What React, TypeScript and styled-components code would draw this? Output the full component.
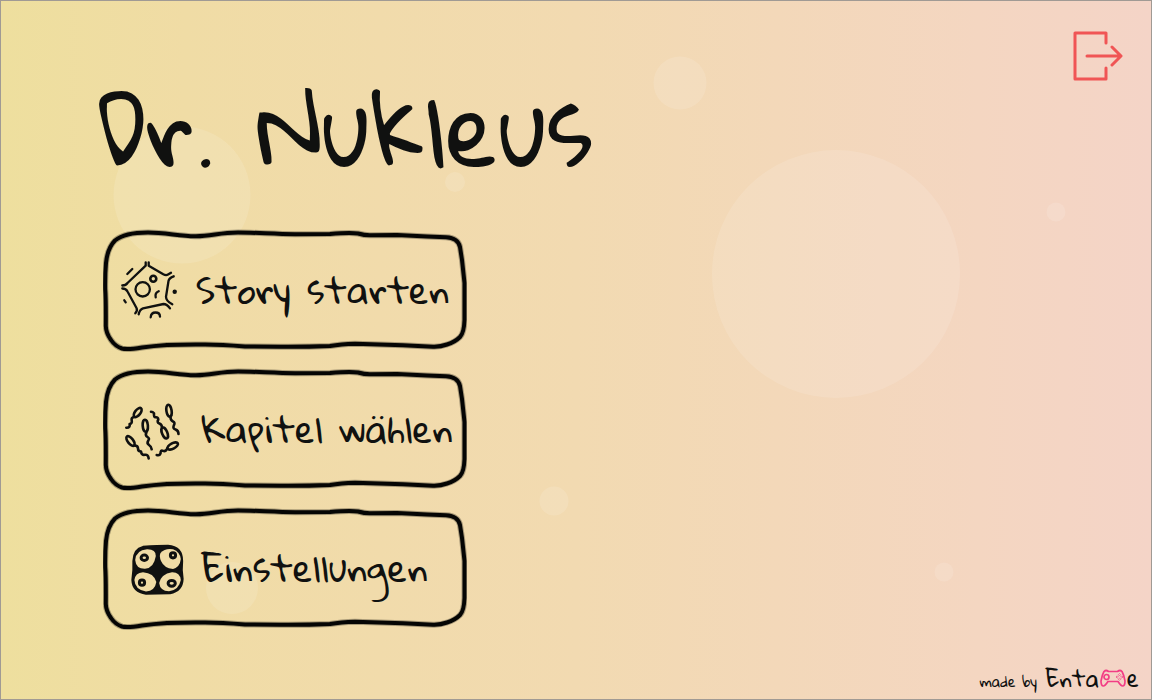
import React from 'react';
import styled, { createGlobalStyle } from 'styled-components';

const GlobalStyle = createGlobalStyle`
  *, *::before, *::after { box-sizing: border-box; }
  body { margin: 0; }
`;

const ink = '#101110';

const Screen = styled.main`
  position: relative;
  display: flex;
  flex-direction: column;
  min-height: 100vh;
  overflow: hidden;
  border: 1px solid #a09a94;
  color: ${ink};
  font-family: 'Gloria Hallelujah', Lato, 'Liberation Sans', sans-serif;
  background: linear-gradient(90deg, #eedf9e 0%, #f0dca5 16%, #f2dab1 50%, #f4d6c1 85%, #f4d4c7 100%);
`;

const Bubble = styled.span<{ $x: number; $y: number; $size: number }>`
  position: absolute;
  left: ${(p) => p.$x}%;
  top: ${(p) => p.$y}%;
  width: ${(p) => p.$size}px;
  height: ${(p) => p.$size}px;
  border-radius: 50%;
  background: rgba(255, 255, 255, 0.12);
  transform: translate(-50%, -50%);
`;

const Body = styled.div`
  position: relative;
  display: flex;
  justify-content: space-between;
  align-items: flex-start;
  flex: 1;
  padding: 28px 28px 0 96px;
`;

const Title = styled.h1`
  margin: 40px 0 44px;
  font-size: 96px;
  line-height: 116px;
  font-weight: 500;
  white-space: nowrap;
`;

const Menu = styled.nav`
  display: flex;
  flex-direction: column;
  gap: 15px;
  padding-left: 6px;
`;

const MenuButton = styled.button`
  position: relative;
  display: flex;
  align-items: center;
  gap: 15px;
  width: 364px;
  height: 124px;
  padding: 0 0 0 18px;
  border: 0;
  background: none;
  color: inherit;
  font: inherit;
  font-size: 36px;
  line-height: 48px;
  white-space: nowrap;
  cursor: pointer;
`;

const Label = styled.span`
  padding-bottom: 4px;
`;

const Frame = styled.svg`
  position: absolute;
  inset: 0;
  width: 100%;
  height: 100%;
  fill: none;
  stroke: #050504;
  stroke-linejoin: round;
`;

const MenuIcon = styled.svg<{ $width: number }>`
  flex: none;
  width: ${(p) => p.$width}px;
  height: 60px;
  fill: none;
  stroke: ${ink};
  stroke-linecap: round;
  stroke-linejoin: round;
`;

const ExitButton = styled.button`
  padding: 0;
  border: 0;
  background: none;
  cursor: pointer;

  svg {
    display: block;
    width: 52px;
    height: 52px;
    fill: none;
    stroke: #f05555;
    stroke-width: 3;
    stroke-linecap: round;
    stroke-linejoin: round;
  }
`;

const Footer = styled.footer`
  position: relative;
  display: flex;
  justify-content: flex-end;
  align-items: baseline;
  gap: 8px;
  padding: 0 12px 4px;
  font-size: 14px;
  line-height: 28px;
`;

const Brand = styled.span`
  display: flex;
  align-items: baseline;
  gap: 1px;
  font-size: 22px;

  svg {
    width: 26px;
    height: 18px;
    fill: none;
    stroke: #f23d85;
    stroke-linejoin: round;
  }
`;

const bubbles = [
  { x: 15.7, y: 27.8, size: 137 },
  { x: 59, y: 11.8, size: 53 },
  { x: 72.6, y: 39.1, size: 248 },
  { x: 39.5, y: 25.9, size: 20 },
  { x: 91.7, y: 30.3, size: 19 },
  { x: 48.1, y: 71.7, size: 29 },
  { x: 82, y: 81.8, size: 19 },
  { x: 20.1, y: 84.1, size: 52 },
];

const CellIcon = () => (
  <MenuIcon $width={60} viewBox="0 0 60 60" strokeWidth="2.3" aria-hidden="true">
    <path d="M24.7 1.3V4.7L6.5 22Q5 24.3 1.3 24.5" />
    <path d="M27.7 1.3V4.7L42.3 13.3Q45 14.8 47 13.6T50 11.8" />
    <path d="M52.7 15.3Q48 17 47.5 20L45 35.7Q45 40 51.3 43.3" />
    <path d="M49 47.3Q46 43 42.5 43L22 47.3Q18.5 48.5 17.7 53.3" />
    <path d="M14.3 52.3Q16.8 49.5 15.5 47L6.5 30.5Q5 27.5 1.3 27.5" />
    <path d="M6.3 13L11.3 8M3.3 39.3L4.7 41.3" />
    <circle cx="21.7" cy="28.3" r="7.2" />
    <circle cx="32.3" cy="17.7" r="3" strokeWidth="2.6" />
    <path d="M37.7 30.3Q33.7 32 34.7 36.3M29.7 56.3Q30 51.5 34.5 51.5T39 55.7" />
    <circle cx="53.7" cy="30.7" r="2.2" fill={ink} stroke="none" />
  </MenuIcon>
);

const BacteriaIcon = () => (
  <MenuIcon $width={65} viewBox="0 0 65 60" strokeWidth="2.6" aria-hidden="true">
    <ellipse cx="16.7" cy="12.5" rx="2.7" ry="5.4" transform="rotate(38 16.7 12.5)" />
    <path d="M13.3 17Q10 17.5 10.7 20.5T8.6 24Q9.5 28 5.3 27.7" />
    <ellipse cx="24.3" cy="25.7" rx="2.6" ry="6" transform="rotate(-4 24.3 25.7)" />
    <path d="M25.4 32Q24 35.5 26.5 37T27.3 40.5Q25.5 43.5 28 45T30.7 49.3" />
    <ellipse cx="48" cy="10.7" rx="2.6" ry="6" transform="rotate(-9 48 10.7)" />
    <path d="M49.5 17Q49.5 20.5 52 21.5T52.8 25.5Q51.5 28.5 54.5 29.5T57.5 34" />
    <ellipse cx="43.7" cy="33" rx="2.6" ry="5.8" transform="rotate(-22 43.7 33)" />
    <path d="M41 27.5Q41 24.5 38.3 23.5T37.3 19.5Q37 17 34.8 17.3T33 13.3Q31.8 11.8 30 11.8" />
    <ellipse cx="9.5" cy="41" rx="2.7" ry="5.8" transform="rotate(-38 9.5 41)" />
    <path d="M13.5 45.5Q17 45.5 17 48.5T20 51.5Q20.5 55.5 23.8 54.8T27.7 58.5" />
    <ellipse cx="51.7" cy="46" rx="2.7" ry="5.8" transform="rotate(62 51.7 46)" />
    <path d="M46.3 48.7Q44.5 52 42 50.8T39.5 53.5Q38.5 56 35.7 55" />
  </MenuIcon>
);

const TissueIcon = () => (
  <MenuIcon $width={65} viewBox="0 0 65 60" strokeWidth="2.3" aria-hidden="true">
    <path
      d="M22 8Q37 7 47 7Q61 8 61 22Q60 31 61.5 40Q61 52 49 54Q36 54 25 54.5Q12 53 11.5 41Q13 31 12.5 22Q13 10 22 8z"
      fill={ink}
    />
    <g fill="#f0dca6" stroke="none">
      <path d="M14.2 21Q15 11 26 10.2Q35 10 34.8 17Q33 29 24 29.8Q15 30 14.2 21z" />
      <path d="M39.5 14Q44 9 52 10.3Q59 13 59.8 20Q59 28 52 30Q43 29 40 22Q38 17 39.5 14z" />
      <path d="M13.4 41Q14 34 22 33.2Q33 34 35.3 43Q34 52 25 52.4Q14 51 13.4 41z" />
      <path d="M38.2 44Q40 35 51 33.2Q59 33 59.8 41Q58 51 48 52.3Q39 52 38.2 44z" />
    </g>
    <g strokeWidth="3">
      <ellipse cx="23.3" cy="18.7" rx="3.2" ry="2.7" />
      <circle cx="52" cy="16.3" r="2.6" />
      <circle cx="21" cy="43.7" r="2.6" />
      <ellipse cx="50.7" cy="44.3" rx="3.6" ry="2.9" />
    </g>
  </MenuIcon>
);

const items = [
  { label: 'Story starten', Icon: CellIcon },
  { label: 'Kapitel wählen', Icon: BacteriaIcon },
  { label: 'Einstellungen', Icon: TissueIcon },
];

const outline =
  'M25 5.5Q33 3.5 45 3.5C62 3.5 76 7 92 7.2C108 7.4 116 3.5 135 3.5C152 3.5 170 5 192 5.3L227 5C238 4 249 3.5 255 4.5Q262 6.5 268 6.3L294 6L324 7.5L343 8.3Q355 9 357 18L359 31L361.5 54V91Q361 104 357 108Q352 113 344 115.5Q337 118 330 117.7L300 116.3L252 114.7Q238 115 227 117Q202 118 177 117.8L142 117.5Q118 115.5 102 115.5Q80 115.3 64 116Q50 117 39 118.5Q24 121 19 119.5Q12 117 8 111Q3 104 2.8 97Q3 70 2.2 60Q2 45 3 34Q4.5 19 12 11.5Q17 7.5 25 5.5z';

const SketchFrame = () => (
  <Frame viewBox="0 0 364 124" preserveAspectRatio="none" aria-hidden="true">
    <path d={outline} strokeOpacity="0.3" strokeWidth="6" />
    <path d={outline} strokeWidth="4" />
  </Frame>
);

const App = () => (
  <>
    <GlobalStyle />
    <Screen>
      {bubbles.map((b) => (
        <Bubble key={`${b.x}-${b.y}`} $x={b.x} $y={b.y} $size={b.size} />
      ))}
      <Body>
        <div>
          <Title>Dr. Nukleus</Title>
          <Menu>
            {items.map(({ label, Icon }) => (
              <MenuButton key={label} type="button">
                <SketchFrame />
                <Icon />
                <Label>{label}</Label>
              </MenuButton>
            ))}
          </Menu>
        </div>
        <ExitButton type="button" aria-label="Beenden">
          <svg viewBox="0 0 52 52" aria-hidden="true">
            <path d="M35 14V4H4v46h31V39M16 27h33M41 18l9 9-9 9" />
          </svg>
        </ExitButton>
      </Body>
      <Footer>
        <span>made by</span>
        <Brand>
          Enta
          <svg viewBox="0 0 26 18" role="img" aria-label="m">
            <path
              d="M4 2.5Q6 .5 8.5 2.5H17.5Q20 .5 22 2.5Q24 6 25 12Q25 17 22.5 17Q21 17 18 12.5H8Q5 17 3.5 17Q1 17 1 12Q2 6 4 2.5z"
              strokeWidth="1.7"
            />
            <circle cx="6.5" cy="8" r="2.5" strokeWidth="1.7" />
            <path
              d="M19.5 4.5l1.2 1.2-1.2 1.2-1.2-1.2zM19.5 9l1.2 1.2-1.2 1.2-1.2-1.2zM17.2 6.8l1.2 1.2-1.2 1.2-1.2-1.2zM21.8 6.8l1.2 1.2-1.2 1.2-1.2-1.2z"
              strokeWidth="0.7"
            />
          </svg>
          e
        </Brand>
      </Footer>
    </Screen>
  </>
);

export default App;
